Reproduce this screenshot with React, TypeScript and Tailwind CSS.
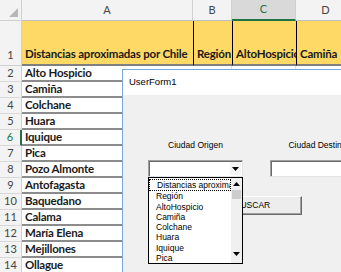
import React from 'react';

const CITIES = [
  'Alto Hospicio', 'Camiña', 'Colchane', 'Huara', 'Iquique', 'Pica', 'Pozo Almonte',
  'Antofagasta', 'Baquedano', 'Calama', 'María Elena', 'Mejillones', 'Ollague',
];

const LIST = ['Distancias aproximadas por Chile', 'Región', 'AltoHospicio', 'Camiña', 'Colchane', 'Huara', 'Iquique', 'Pica'];

const COLS = ['A', 'B', 'C', 'D'];

function Arrow({ up = false }: { up?: boolean }) {
  return (
    <svg width="7" height="4" viewBox="0 0 7 4" className={up ? 'rotate-180' : ''}>
      <path d="M0 0h7L3.5 4z" fill="#000" />
    </svg>
  );
}

function Field({ label, combo }: { label: string; combo?: boolean }) {
  return (
    <div className="relative flex flex-col items-center w-[95px] shrink-0">
      <span className="text-[8.5px] leading-[12px] mb-[9px] whitespace-nowrap text-black">{label}</span>
      <div className="flex w-full h-[17px] bg-white border border-t-[#a0a0a0] border-l-[#a0a0a0] border-r-[#e3e3e3] border-b-[#e3e3e3] shadow-[inset_1px_1px_0_#696969]">
        <div className="flex-1" />
        {combo && (
          <div className="w-[11px] mt-[1px] mb-[1px] mr-[1px] flex items-center justify-center bg-[#f4f4f4]">
            <Arrow />
          </div>
        )}
      </div>

      {combo && (
        <div className="absolute left-0 top-[38px] w-[95px] h-[87px] flex bg-white border border-black z-10">
          <div className="flex-1 min-w-0 pt-[1px] text-[8.5px] leading-[10.3px] text-black">
            {LIST.map((item, i) => (
              <div
                key={item}
                className={`pl-[7px] whitespace-nowrap overflow-hidden ${i === 0 ? 'border border-dotted border-black pl-[6px]' : ''}`}
              >
                {item}
              </div>
            ))}
          </div>
          <div className="w-[11px] flex flex-col bg-[#f0f0f0]">
            <div className="h-[11px] flex items-center justify-center"><Arrow up /></div>
            <div className="h-[11px] bg-[#cdcdcd] border border-[#f0f0f0]" />
            <div className="flex-1" />
            <div className="h-[11px] mb-[4px] flex items-center justify-center"><Arrow /></div>
          </div>
        </div>
      )}
    </div>
  );
}

export default function App() {
  return (
    <div className="relative w-[341px] h-[272px] overflow-hidden bg-white font-['Lato',sans-serif] text-[#222]">
      <div className="grid grid-cols-[22px_171px_39px_64px_60px] grid-rows-[21px_45px] auto-rows-[16px]">
        {/* column headers */}
        <div className="relative bg-[#f3f3f3] border-r border-b border-[#d0d0d0]">
          <div className="absolute right-[3px] bottom-[3px] w-0 h-0 border-l-[9px] border-l-transparent border-b-[9px] border-b-[#b8b8b8]" />
        </div>
        {COLS.map((c) => (
          <div
            key={c}
            className={`flex items-center justify-center text-[11px] border-r border-[#d0d0d0] ${
              c === 'C' ? 'bg-[#d9d9d9] border-b-2 border-b-[#217346] text-[#217346]' : 'bg-[#f3f3f3] border-b border-b-[#c0c0c0] text-[#444]'
            }`}
          >
            {c}
          </div>
        ))}

        {/* row 1 */}
        <div className="flex items-end justify-center pb-[2px] bg-[#f3f3f3] border-r border-b border-[#d0d0d0] text-[11px] text-[#444]">1</div>
        {['Distancias aproximadas por Chile', 'Región', 'AltoHospicio', 'Camiña'].map((t, i) => (
          <div
            key={t}
            className={`flex items-end pl-[3px] pb-[2px] overflow-hidden whitespace-nowrap bg-[#ffd966] border-b-2 border-b-[#7f7f7f] font-bold text-[11.5px] tracking-[-0.2px] text-[#1a1a1a] ${
              i > 0 ? 'border-l border-l-black' : ''
            }`}
          >
            {t}
          </div>
        ))}

        {/* rows 2..14 */}
        {CITIES.map((city, i) => {
          const n = i + 2;
          const active = n === 6;
          return (
            <React.Fragment key={city}>
              <div
                className={`flex items-center justify-center text-[11px] bg-[#f3f3f3] border-b border-[#d9d9d9] ${
                  active ? 'border-r-2 border-r-[#217346] text-[#217346] bg-[#e1e1e1]' : 'border-r border-r-[#d0d0d0] text-[#444]'
                }`}
              >
                {n}
              </div>
              <div className="flex items-center pl-[3px] bg-white border-b-2 border-b-[#8c8c8c] font-bold text-[11.5px] tracking-[-0.2px] text-[#1a1a1a] whitespace-nowrap">
                {city}
              </div>
              <div className="border-r border-b border-[#e0e0e0]" />
              <div className="border-r border-b border-[#e0e0e0]" />
              <div className="border-b border-[#e0e0e0]" />
            </React.Fragment>
          );
        })}
      </div>

      {/* UserForm window */}
      <div className="absolute left-[122px] top-[69px] w-[250px] h-[220px] bg-[#f0f0f0] border border-[#7aa7dc] font-['Liberation_Sans',Arial,sans-serif]">
        <div className="h-[25px] bg-white flex items-center pl-[6px] text-[9.5px] text-black">UserForm1</div>
        <div className="pt-[44px] pl-[25px]">
          <div className="flex gap-[27px]">
            <Field label="Ciudad Origen" combo />
            <Field label="Ciudad Destino" />
          </div>
          <button className="ml-[55px] mt-[19px] w-[99px] h-[19px] flex items-center justify-center bg-[#ededed] border border-t-white border-l-white border-r-[#696969] border-b-[#696969] shadow-[inset_-1px_-1px_0_#a0a0a0] text-[8.5px] text-black">
            BUSCAR
          </button>
        </div>
      </div>
    </div>
  );
}
